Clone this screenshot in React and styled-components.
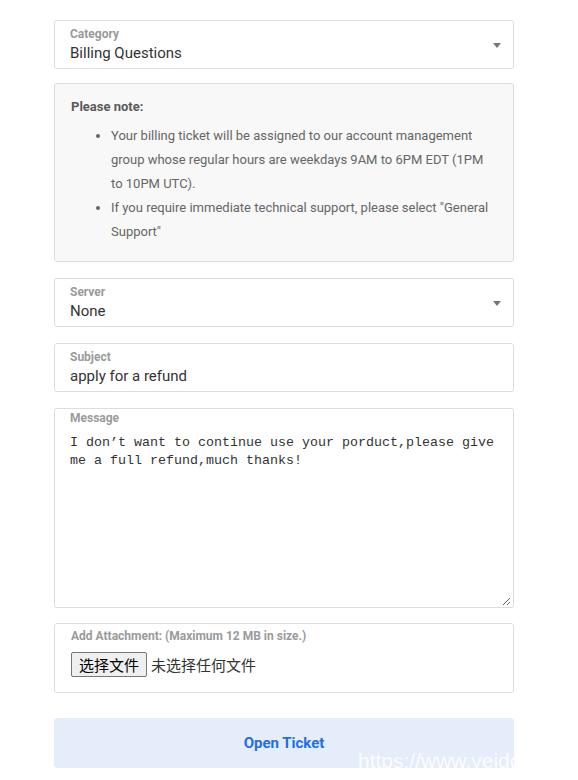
import React from "react";
import styled, { createGlobalStyle } from "styled-components";

const GlobalStyle = createGlobalStyle`
  body {
    margin: 0;
    background: #fff;
    font-family: Roboto, "Noto Sans", Arial, sans-serif;
  }
`;

const Page = styled.div`
  position: relative;
  width: 460px;
  padding: 20px 0 12px 54px;
  display: flex;
  flex-direction: column;
`;

const Field = styled.div`
  position: relative;
  border: 1px solid #ddd;
  border-radius: 3px;
  background: #fff;
  padding: ${(p) => p.$pad || "5px 15px 5px"};
  margin-bottom: ${(p) => p.$gap ?? 16}px;
  display: flex;
  flex-direction: column;
  height: ${(p) => (p.$height ? `${p.$height}px` : "auto")};
  box-sizing: border-box;
`;

const Label = styled.div`
  font-size: 12px;
  font-weight: 700;
  line-height: 16px;
  color: #9a9a9a;
`;

const Value = styled.div`
  margin-top: 1px;
  font-size: 15px;
  line-height: 20px;
  color: #333;
`;

const Caret = styled.span`
  position: absolute;
  right: 12px;
  top: 22px;
  width: 0;
  height: 0;
  border-left: 4px solid transparent;
  border-right: 4px solid transparent;
  border-top: 5px solid #777;
`;

const Note = styled.div`
  background: #f8f8f8;
  border: 1px solid #ddd;
  border-radius: 3px;
  padding: 15px 16px 17px;
  margin-bottom: 16px;
  color: #666;
  font-size: 13px;
`;

const NoteTitle = styled.p`
  margin: 0 0 9px;
  font-weight: 700;
  line-height: 16px;
  color: #5a5a5a;
`;

const NoteList = styled.ul`
  margin: 0;
  padding-left: 40px;
  line-height: 24px;
`;

const TextArea = styled.textarea`
  flex: 1;
  border: none;
  outline: none;
  padding: 8px 0 0;
  margin: 0 -13px 0 0;
  font-family: "Liberation Mono", "DejaVu Sans Mono", monospace;
  font-size: 13.33px;
  line-height: 18px;
  color: #333;
  resize: vertical;
  background: transparent;
`;

const FileRow = styled.div`
  display: flex;
  align-items: center;
  margin-top: 8px;
  font-family: "Noto Sans CJK SC", sans-serif;
  font-size: 15px;
`;

const FileButton = styled.label`
  box-sizing: border-box;
  height: 25px;
  padding: 0 7px;
  display: flex;
  align-items: center;
  border: 1px solid #767676;
  border-radius: 2px;
  background: #efefef;
  color: #000;
  cursor: pointer;
  input {
    display: none;
  }
`;

const FileName = styled.span`
  margin-left: 4px;
  color: #333;
`;

const Submit = styled.button`
  margin-top: 25px;
  height: 50px;
  border: none;
  border-radius: 4px;
  background: #e5ecfa;
  color: #1f6fe6;
  font-family: Roboto, sans-serif;
  font-size: 15px;
  font-weight: 700;
  cursor: pointer;
`;

const Watermark = styled.span`
  position: absolute;
  left: 358px;
  top: 749px;
  white-space: nowrap;
  font-family: "Liberation Sans", Arial, sans-serif;
  font-size: 21px;
  color: rgba(255, 255, 255, 0.9);
  pointer-events: none;
`;

const App = () => {
  return (
    <>
      <GlobalStyle />
      <Page>
        <Field $gap={14}>
          <Label>Category</Label>
          <Value>Billing Questions</Value>
          <Caret />
        </Field>
        <Note>
          <NoteTitle>Please note:</NoteTitle>
          <NoteList>
            <li>
              Your billing ticket will be assigned to our account management
              group whose regular hours are weekdays 9AM to 6PM EDT (1PM to
              10PM UTC).
            </li>
            <li>
              If you require immediate technical support, please select
              "General Support"
            </li>
          </NoteList>
        </Note>
        <Field>
          <Label>Server</Label>
          <Value>None</Value>
          <Caret />
        </Field>
        <Field>
          <Label>Subject</Label>
          <Value>apply for a refund</Value>
        </Field>
        <Field $height={200} $pad="1px 15px 1px" $gap={15}>
          <Label>Message</Label>
          <TextArea
            defaultValue={
              "I don’t want to continue use your porduct,please give me a full refund,much thanks!"
            }
          />
        </Field>
        <Field $pad="4px 16px 15px" $gap={0}>
          <Label>Add Attachment: (Maximum 12 MB in size.)</Label>
          <FileRow>
            <FileButton>
              选择文件
              <input type="file" />
            </FileButton>
            <FileName>未选择任何文件</FileName>
          </FileRow>
        </Field>
        <Submit>Open Ticket</Submit>
        <Watermark>https://www.veidc.com</Watermark>
      </Page>
    </>
  );
};

export default App;
